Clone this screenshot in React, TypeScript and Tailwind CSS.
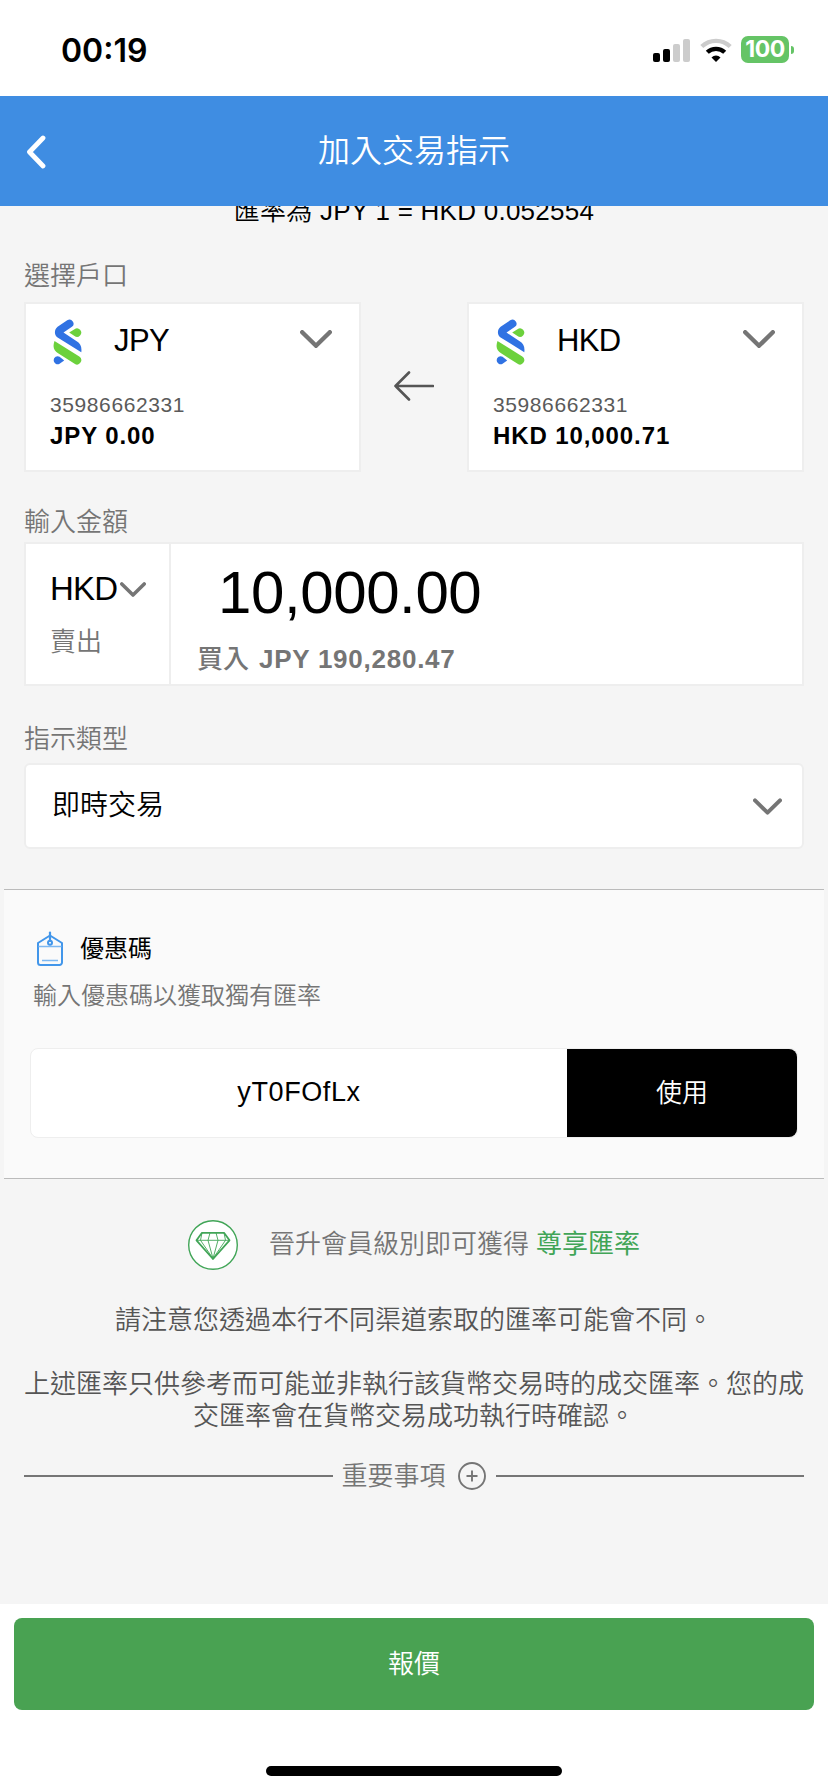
import type { ReactNode } from 'react';

const ChevronDown = ({ className }: { className: string }) => (
  <svg viewBox="0 0 32 18" fill="none" className={className}>
    <path
      d="M2.200 2.200L16 15.800 29.800 2.200"
      stroke="#757575"
      strokeWidth="4.400"
      strokeLinecap="round"
      strokeLinejoin="round"
    />
  </svg>
);

const BankLogo = () => (
  <svg viewBox="0 0 30 46" className="h-[46px] w-[30px]">
    <path
      d="M14.200 1.300a4 4 0 0 1 4.400 6.800L10.500 13.600l13.200 8.600C27.400 24.600 29 27.400 28.300 33.300L4.600 18.500C1 16.200 1 10.500 4.600 7.800z"
      fill="#3072e3"
    />
    <path d="M16.200 13.600l5.300-3.400a4.200 4.200 0 1 1 0 6.800z" fill="#6cd13c" />
    <path
      d="M1.500 22l24.800 15.600a4.300 4.300 0 0 1-4.700 7.200L5.500 34.600C1 31.800-.7 28.500 1.500 22z"
      fill="#6cd13c"
    />
    <path d="M11.200 41.400L6.600 44.800a4 4 0 1 1 0-7z" fill="#3072e3" />
  </svg>
);

const TagIcon = () => (
  <svg viewBox="0 0 28 36" fill="none" stroke="#4296ea" className="h-9 w-7">
    <path
      d="M2 12L14 4.500 26 12v19.500a2.500 2.500 0 0 1-2.500 2.500h-19A2.500 2.500 0 0 1 2 31.500z"
      strokeWidth="2"
      strokeLinejoin="round"
    />
    <path d="M2.500 15.500h23M6 29.500h16" stroke="#7db8f1" strokeWidth="1.500" />
    <path d="M14 1.500V10" strokeWidth="2.200" strokeLinecap="round" />
    <circle cx="14" cy="11.800" r="2" strokeWidth="2" />
  </svg>
);

const DiamondIcon = () => (
  <svg viewBox="0 0 50 50" fill="none" stroke="#41a557" className="size-[50px]">
    <circle cx="25" cy="25" r="24.300" fill="#fff" strokeWidth="1.400" />
    <path d="M14 12.800h22l5.500 7.500L25 39 8.500 20.300z" strokeWidth="1.800" strokeLinejoin="round" />
    <path
      d="M8.500 20.300h33M14 12.800l-1.500 7.500L25 38.500l12.500-18.200-1.500-7.500M22 12.800l-2 7.500 5 18.200 5-18.200-2-7.500"
      strokeWidth=".9"
    />
  </svg>
);

const StatusBar = () => (
  <div className="flex h-24 shrink-0 items-center justify-between bg-white pl-[61px] pr-[34px] pt-[3px]">
    <p className="pt-[3px] font-['Inter'] text-[32px] font-semibold leading-8">00:19</p>
    <div className="flex items-center">
      <svg viewBox="0 0 37 24" className="h-6 w-[37px]">
        <rect x="0" y="15" width="7" height="9" rx="2" />
        <rect x="10" y="11" width="7" height="13" rx="2" />
        <rect x="20" y="6" width="7" height="18" rx="2" fill="#ccc" />
        <rect x="30" y="1" width="7" height="23" rx="2" fill="#ccc" />
      </svg>
      <svg viewBox="0 0 32 24" fill="none" className="ml-[10px] h-6 w-8">
        <path d="M1.800 8.500a20.500 20.500 0 0 1 28.400 0" stroke="#ccc" strokeWidth="4.300" />
        <path d="M7.300 14.300a12.500 12.500 0 0 1 17.400 0" stroke="#000" strokeWidth="4.300" />
        <path d="M16 24l-4.500-4.600a6.500 6.500 0 0 1 9 0z" fill="#000" />
      </svg>
      <div className="ml-[9px] flex h-[27px] w-12 items-center justify-center rounded-[7px] bg-[#65c466]">
        <span className="font-['Inter'] text-[23px] font-bold leading-none tracking-[-0.4px] text-white">100</span>
      </div>
      <div className="ml-[2px] h-2 w-[3px] rounded-r-full bg-[#65c466]" />
    </div>
  </div>
);

const Label = ({ children }: { children: ReactNode }) => (
  <p className="h-8 text-[26px] leading-8 text-[#757575]">{children}</p>
);

type AccountCardProps = {
  currency: string;
  account: string;
  balance: string;
};

const AccountCard = ({ currency, account, balance }: AccountCardProps) => (
  <div className="h-[170px] w-[337px] border-2 border-[#eee] bg-white pl-6 pt-[15px]">
    <div className="flex h-[46px] items-start">
      <div className="ml-[3px]">
        <BankLogo />
      </div>
      <p className="ml-[31px] w-[186px] pt-[6px] text-[31px] leading-8 tracking-[-0.6px]">{currency}</p>
      <ChevronDown className="mt-[11px] h-[18px] w-8" />
    </div>
    <p className="mt-[28px] text-[21px] leading-6 tracking-[0.6px] text-[#5a5a5a]">{account}</p>
    <p className="mt-1 text-[24px] font-bold leading-[30px] tracking-[0.9px]">{balance}</p>
  </div>
);

const App = () => {
  return (
    <div className="flex h-[1792px] w-[828px] flex-col overflow-hidden bg-[#f5f5f5] font-['Liberation_Sans','Noto_Sans_CJK_TC',sans-serif] font-[350] text-black">
      <StatusBar />

      <header className="grid h-[110px] shrink-0 grid-cols-[1fr_auto_1fr] items-center bg-[#3f8de2] text-white">
        <svg viewBox="0 0 20 34" fill="none" className="ml-[26px] mt-[2px] h-[34px] w-5">
          <path d="M17 3L3.500 17 17 31" stroke="#fff" strokeWidth="4.800" strokeLinecap="round" strokeLinejoin="round" />
        </svg>
        <h1 className="text-[32px] font-[350] leading-10">加入交易指示</h1>
      </header>

      <main className="flex h-[1398px] shrink-0 flex-col">
        {/* rate line is scrolled partly under the header */}
        <div className="flex h-[21px] items-end justify-center overflow-hidden">
          <p className="whitespace-nowrap text-[26px] leading-8 tracking-[0.25px]">匯率為 JPY 1 = HKD 0.052554</p>
        </div>

        <section className="mt-[33px] px-6">
          <Label>選擇戶口</Label>
          <div className="mt-[10px] flex items-center justify-between">
            <AccountCard currency="JPY" account="35986662331" balance="JPY 0.00" />
            <svg viewBox="0 0 40 30" fill="none" className="-mt-[3px] h-[30px] w-10">
              <path d="M39 15H1.500M15 1.500L1.500 15 15 28.500" stroke="#555" strokeWidth="2.600" strokeLinecap="round" strokeLinejoin="round" />
            </svg>
            <AccountCard currency="HKD" account="35986662331" balance="HKD 10,000.71" />
          </div>
        </section>

        <section className="mt-[34px] px-6">
          <Label>輸入金額</Label>
          <div className="mt-1 flex h-[144px] border-2 border-[#eee] bg-white">
            <div className="w-[145px] border-r-2 border-[#eee] pl-6">
              <div className="mt-[27px] flex items-center">
                <p className="w-[70px] text-[33px] leading-9 tracking-[-0.8px]">HKD</p>
                <ChevronDown className="h-[15px] w-[26px]" />
              </div>
              <p className="mt-[19px] text-[26px] leading-8 text-[#757575]">賣出</p>
            </div>
            <div className="pl-[26px]">
              <p className="ml-[21px] mt-[16px] text-[60px] leading-[66px] tracking-[-0.4px]">10,000.00</p>
              <p className="mt-[17px] flex gap-[10px] text-[26px] leading-8 text-[#757575]">
                <span className="font-medium">買入</span>
                <span className="font-bold tracking-[0.75px]">JPY 190,280.47</span>
              </p>
            </div>
          </div>
        </section>

        <section className="mt-[37px] px-6">
          <Label>指示類型</Label>
          <div className="mt-2 flex h-[86px] items-center justify-between rounded-md border-2 border-[#eee] bg-white pl-[26px] pr-5">
            <p className="text-[28px] leading-9">即時交易</p>
            <ChevronDown className="h-[17px] w-[29px]" />
          </div>
        </section>

        <section className="mx-1 mt-10 h-[290px] border-y border-[#bbb] bg-[#fafafa]">
          <div className="ml-8 mt-[41px] flex h-9 items-center">
            <TagIcon />
            <p className="ml-4 text-[24px] font-normal leading-8">優惠碼</p>
          </div>
          <p className="ml-[29px] mt-[13px] text-[24px] leading-8 text-[#757575]">輸入優惠碼以獲取獨有匯率</p>
          <div className="ml-[26px] mr-[26px] mt-9 flex h-[90px] items-center rounded-lg border border-[#eee] bg-white">
            <p className="flex-1 pb-[2px] text-center text-[27px] leading-8 tracking-[0.6px]">yT0FOfLx</p>
            <button className="h-[88px] w-[230px] rounded-r-lg bg-black text-[26px] leading-8 text-white">使用</button>
          </div>
        </section>

        <section className="mt-[41px] px-6 text-center text-[26px] leading-8 text-[#555]">
          <div className="flex items-center justify-center">
            <DiamondIcon />
            <p className="ml-[31px] pb-[2px] text-[#757575]">
              晉升會員級別即可獲得 <span className="font-normal text-[#41a557]">尊享匯率</span>
            </p>
          </div>
          <p className="mt-[34px]">請注意您透過本行不同渠道索取的匯率可能會不同。</p>
          <p className="mt-8">
            上述匯率只供參考而可能並非執行該貨幣交易時的成交匯率。您的成
            <br />
            交匯率會在貨幣交易成功執行時確認。
          </p>
        </section>

        <div className="mt-7 flex items-center px-6 text-[#757575]">
          <div className="h-[2px] flex-1 bg-[#757575]" />
          <p className="ml-[9px] text-[26px] leading-8">重要事項</p>
          <svg viewBox="0 0 28 28" fill="none" stroke="#757575" className="ml-3 mr-[10px] size-7">
            <circle cx="14" cy="14" r="13" strokeWidth="1.900" />
            <path d="M14 8.500v11M8.500 14h11" strokeWidth="1.900" />
          </svg>
          <div className="h-[2px] flex-1 bg-[#757575]" />
        </div>
      </main>

      <footer className="flex flex-1 flex-col items-center bg-white pt-[14px]">
        <button className="h-[92px] w-[800px] rounded-lg bg-[#49a252] text-[26px] leading-8 text-white">報價</button>
        <div className="mt-14 h-[10px] w-[296px] rounded-full bg-black" />
      </footer>
    </div>
  );
};

export default App;
